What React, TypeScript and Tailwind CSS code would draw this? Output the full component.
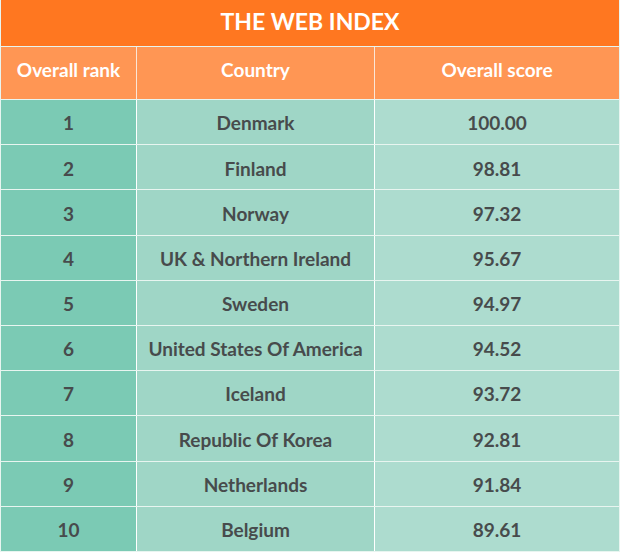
import React from "react";

const rows: [string, string, string][] = [
  ["1", "Denmark", "100.00"],
  ["2", "Finland", "98.81"],
  ["3", "Norway", "97.32"],
  ["4", "UK & Northern Ireland", "95.67"],
  ["5", "Sweden", "94.97"],
  ["6", "United States Of America", "94.52"],
  ["7", "Iceland", "93.72"],
  ["8", "Republic Of Korea", "92.81"],
  ["9", "Netherlands", "91.84"],
  ["10", "Belgium", "89.61"],
];

export default function App() {
  return (
    <div
      className="w-[620px] h-[552px] overflow-hidden bg-[#e8f5f0] flex flex-col gap-px px-px"
      style={{ fontFamily: "Lato, 'Open Sans', sans-serif" }}
    >
      <div className="h-[46px] bg-[#ff7720] flex items-center justify-center pb-[4px] text-white font-bold text-[23px]">
        THE WEB INDEX
      </div>
      <div className="h-[52px] flex gap-px bg-[#fbe6d8]">
        <div className="w-[135px] bg-[#ff9654] flex items-center justify-center pb-[5px] text-white font-bold text-[19px]">
          Overall rank
        </div>
        <div className="w-[237px] bg-[#ff9654] flex items-center justify-center pb-[5px] text-white font-bold text-[19px]">
          Country
        </div>
        <div className="flex-1 bg-[#ff9654] flex items-center justify-center pb-[5px] text-white font-bold text-[19px]">
          Overall score
        </div>
      </div>
      {rows.map(([r, c, s]) => (
        <div key={r} className="h-[44.2px] flex gap-px bg-white">
          <div className="w-[135px] bg-[#7bcab4] flex items-center justify-center pt-[3px] text-[#474b4c] font-bold text-[19px]">
            {r}
          </div>
          <div className="w-[237px] bg-[#9fd6c6] flex items-center justify-center pt-[3px] text-[#474b4c] font-bold text-[19px]">
            {c}
          </div>
          <div className="flex-1 bg-[#addccf] flex items-center justify-center pt-[3px] text-[#474b4c] font-bold text-[19px]">
            {s}
          </div>
        </div>
      ))}
    </div>
  );
}
